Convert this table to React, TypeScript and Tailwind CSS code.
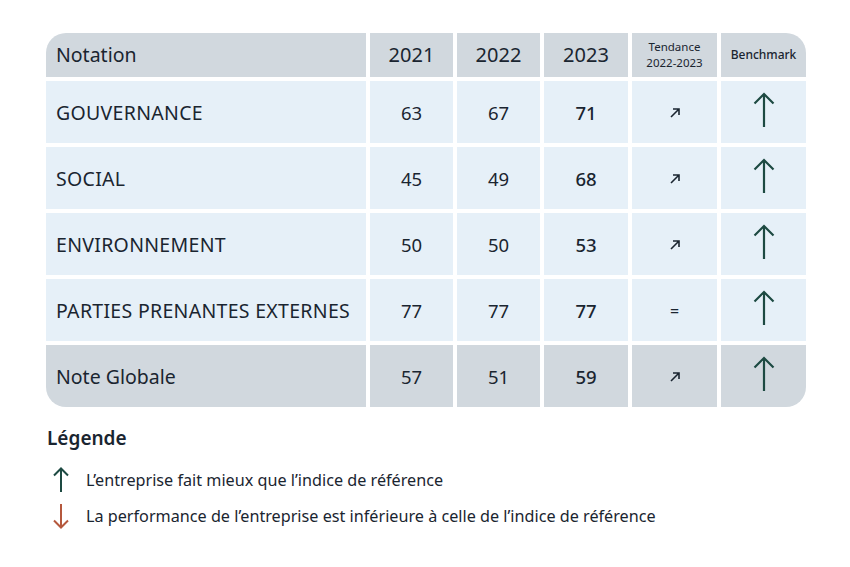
import React from "react";

const UpArrow = ({ className = "" }: { className?: string }) => (
  <svg width="22" height="36" viewBox="0 0 22 36" className={className} fill="none">
    <path d="M11 2 V35 M1.5 11.5 L11 2 L20.5 11.5" stroke="#1d4a42" strokeWidth="2.2" strokeLinecap="butt" strokeLinejoin="miter" />
  </svg>
);

const Diag = () => (
  <svg width="12" height="12" viewBox="0 0 12 12" fill="none">
    <path d="M2 10 L10 2 M4 2 H10 V8" stroke="#1a2530" strokeWidth="1.6" />
  </svg>
);

type Row = { label: string; a: string; b: string; c: string; t: "up" | "eq" };
const rows: Row[] = [
  { label: "GOUVERNANCE", a: "63", b: "67", c: "71", t: "up" },
  { label: "SOCIAL", a: "45", b: "49", c: "68", t: "up" },
  { label: "ENVIRONNEMENT", a: "50", b: "50", c: "53", t: "up" },
  { label: "PARTIES PRENANTES EXTERNES", a: "77", b: "77", c: "77", t: "eq" },
];

export default function App() {
  const font = { fontFamily: '"Noto Sans", "Open Sans", sans-serif' };
  return (
    <div className="w-[850px] h-[567px] bg-white text-[#1a2530]" style={font}>
      <div className="pl-[46px] pt-[33px]">
        <div className="w-[760px] rounded-[20px] overflow-hidden grid grid-cols-[320px_83px_83px_84px_85px_85px] grid-rows-[44px_repeat(5,62px)] gap-[4px]">
          <div className="bg-[#d1d8de] flex items-center pl-[10px] text-[19.5px]">Notation</div>
          <div className="bg-[#d1d8de] flex items-center justify-center text-[20px]">2021</div>
          <div className="bg-[#d1d8de] flex items-center justify-center text-[20px]">2022</div>
          <div className="bg-[#d1d8de] flex items-center justify-center text-[20px]">2023</div>
          <div className="bg-[#d1d8de] flex flex-col items-center justify-center text-[11.5px] leading-[16px]">
            <span>Tendance</span>
            <span>2022-2023</span>
          </div>
          <div className="bg-[#d1d8de] flex items-center justify-center text-[12px] font-medium">Benchmark</div>
          {rows.map((r) => (
            <React.Fragment key={r.label}>
              <div className="bg-[#e6f0f8] flex items-center pl-[10px] pt-[2px] text-[19.5px] tracking-[0.3px]">{r.label}</div>
              <div className="bg-[#e6f0f8] flex items-center justify-center pt-[2px] text-[18.5px]">{r.a}</div>
              <div className="bg-[#e6f0f8] flex items-center justify-center pt-[2px] text-[18.5px]">{r.b}</div>
              <div className="bg-[#e6f0f8] flex items-center justify-center pt-[2px] text-[18.5px] font-medium">{r.c}</div>
              <div className="bg-[#e6f0f8] flex items-center justify-center pt-[2px] text-[16px]">
                {r.t === "up" ? <Diag /> : <span>=</span>}
              </div>
              <div className="bg-[#e6f0f8] flex items-start justify-center pt-[11px]">
                <UpArrow />
              </div>
            </React.Fragment>
          ))}
          <div className="bg-[#d1d8de] flex items-center pl-[10px] pt-[2px] text-[19.5px]">Note Globale</div>
          <div className="bg-[#d1d8de] flex items-center justify-center pt-[2px] text-[18.5px]">57</div>
          <div className="bg-[#d1d8de] flex items-center justify-center pt-[2px] text-[18.5px]">51</div>
          <div className="bg-[#d1d8de] flex items-center justify-center pt-[2px] text-[18.5px] font-medium">59</div>
          <div className="bg-[#d1d8de] flex items-center justify-center pt-[2px]">
            <Diag />
          </div>
          <div className="bg-[#d1d8de] flex items-start justify-center pt-[11px]">
            <UpArrow />
          </div>
        </div>
        <div className="mt-[18px] pl-[1px] text-[19px] font-semibold leading-[26px]">Légende</div>
        <div className="mt-[16px] flex items-center gap-[16px] pl-[6px]">
          <svg width="18" height="26" viewBox="0 0 18 26" fill="none">
            <path d="M9 1.5 V25 M2 8.5 L9 1.5 L16 8.5" stroke="#1d4a42" strokeWidth="2" />
          </svg>
          <span className="text-[16.2px]">L’entreprise fait mieux que l’indice de référence</span>
        </div>
        <div className="mt-[10px] flex items-center gap-[16px] pl-[6px]">
          <svg width="18" height="26" viewBox="0 0 18 26" fill="none">
            <path d="M9 1 V24.5 M2 17.5 L9 24.5 L16 17.5" stroke="#b5583d" strokeWidth="2" />
          </svg>
          <span className="text-[16.2px]">La performance de l’entreprise est inférieure à celle de l’indice de référence</span>
        </div>
      </div>
    </div>
  );
}
